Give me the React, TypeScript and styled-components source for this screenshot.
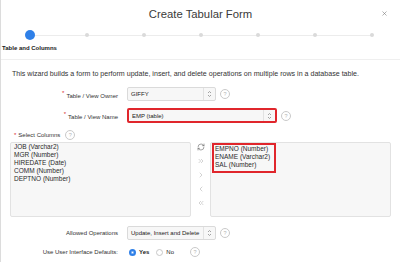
import React from 'react';
import styled, {createGlobalStyle} from 'styled-components';
import {RefreshCw, ChevronsRight, ChevronRight, ChevronLeft, ChevronsLeft, X} from 'lucide-react';

const GlobalStyle = createGlobalStyle`
  html, body {
    margin: 0;
    padding: 0;
    background: #fff;
  }

  body {
    font-family: "Liberation Sans", Arial, sans-serif;
    color: #333;
  }
`

const Dialog = styled.div`
  width: 400px;
  height: 262px;
  box-sizing: border-box;
  border-left: 1px solid #dcdcdc;
  background: #fff;
  overflow: hidden;
  display: flex;
  flex-direction: column;
`

const TitleBar = styled.div`
  position: relative;
  height: 28px;
  display: flex;
  align-items: center;
  justify-content: center;
  font-size: 11.3px;
  color: #3a3a3a;
`

const CloseButton = styled.span`
  position: absolute;
  right: 12px;
  top: 10px;
  display: flex;
  color: #7a7a7a;
`

const Progress = styled.div`
  height: 31px;
  display: flex;
  border-bottom: 1px solid #efefef;
`

type StepProps = {
    $first?: boolean
    $last?: boolean
}

const Step = styled.div<StepProps>`
  position: relative;
  width: 57px;
  display: flex;
  flex-direction: column;
  align-items: center;

  &::before {
    content: '';
    position: absolute;
    top: 7px;
    height: 1px;
    left: ${({$first}) => $first ? '50%' : '0'};
    right: ${({$last}) => $last ? '50%' : '0'};
    background: #ececec;
  }
`

const Dot = styled.span<{ $active?: boolean }>`
  position: relative;
  z-index: 1;
  width: ${({$active}) => $active ? '10px' : '4px'};
  height: ${({$active}) => $active ? '10px' : '4px'};
  margin-top: ${({$active}) => $active ? '2px' : '5px'};
  border-radius: 50%;
  background: ${({$active}) => $active ? '#2f80e8' : '#dadada'};
`

const StepLabel = styled.span`
  margin-top: 4px;
  font-size: 6px;
  line-height: 8px;
  font-weight: bold;
  white-space: nowrap;
  color: #222;
`

const Body = styled.div`
  display: flex;
  flex-direction: column;
  padding: 9px 9px 0 9px;
`

const Description = styled.p`
  margin: 0 0 0 2px;
  font-size: 7.1px;
  line-height: 10px;
  color: #333;
  white-space: nowrap;
`

const FormRow = styled.div<{ $top: number }>`
  display: grid;
  grid-template-columns: 108px auto;
  column-gap: 9px;
  align-items: center;
  margin-top: ${({$top}) => $top}px;
`

const Label = styled.span`
  text-align: right;
  font-size: 6px;
  color: #333;
  white-space: nowrap;
`

const Required = styled.span`
  color: #d9262c;
  font-size: 6px;
  vertical-align: super;
  margin-right: 2px;
`

const Field = styled.div`
  display: flex;
  align-items: center;
`

const Select = styled.div<{ $width: number, $error?: boolean }>`
  display: flex;
  align-items: stretch;
  width: ${({$width}) => $width}px;
  height: ${({$error}) => $error ? 15 : 14}px;
  box-sizing: border-box;
  border: ${({$error}) => $error ? '2px solid #e0262c' : '1px solid #dadada'};
  border-radius: 2px;
  background: #f7f7f7;
  font-size: 6px;
  color: #222;
`

const SelectValue = styled.span`
  flex: 1;
  display: flex;
  align-items: center;
  padding-left: 3px;
  white-space: nowrap;
`

const SelectArrows = styled.span`
  width: 11px;
  display: flex;
  align-items: center;
  justify-content: center;
  border-left: 1px solid #e2e2e2;
`

const Help = styled.span<{ $left: number }>`
  width: 8px;
  height: 8px;
  margin-left: ${({$left}) => $left}px;
  border: 1px solid #c9c9c9;
  border-radius: 50%;
  display: flex;
  align-items: center;
  justify-content: center;
  font-size: 5.5px;
  color: #b5b5b5;
`

const ColumnsHeader = styled.div`
  display: flex;
  align-items: center;
  margin-top: 7px;
  padding-left: 4px;
  height: 10px;
  font-size: 6px;
  color: #333;
`

const Lists = styled.div`
  display: flex;
  margin-top: 2px;
  height: 75px;
`

const ListBox = styled.div`
  width: 181px;
  height: 100%;
  box-sizing: border-box;
  border: 1px solid #e2e2e2;
  border-radius: 2px;
  background: #f7f7f7;
  padding: 0 3px;
`

const Selected = styled.div`
  display: inline-block;
  margin-left: -2px;
  border: 2px solid #e0262c;
  padding: 0 4px 2px 1px;
`

const Item = styled.div`
  font-size: 6.5px;
  line-height: 8px;
  color: #2a2a2a;
  white-space: nowrap;
`

const Shuttle = styled.div`
  width: 19px;
  display: flex;
  flex-direction: column;
  align-items: center;
  gap: 6px;
  padding-top: 1px;
  color: #999;
`

const RadioGroup = styled.div`
  display: flex;
  align-items: center;
  font-size: 6px;
  color: #222;
`

const Radio = styled.span<{ $checked?: boolean, $left: number }>`
  width: 7px;
  height: 7px;
  box-sizing: border-box;
  margin-left: ${({$left}) => $left}px;
  margin-right: 3px;
  border-radius: 50%;
  border: ${({$checked}) => $checked ? '2px solid #2f80e8' : '1px solid #c8c8c8'};
  background: #fff;
  box-shadow: ${({$checked}) => $checked ? 'inset 0 0 0 0.5px #2f80e8' : 'none'};
`

const RadioText = styled.span<{ $bold?: boolean }>`
  font-weight: ${({$bold}) => $bold ? 'bold' : 'normal'};
`

const Arrows = () => (
    <svg width="5" height="8" viewBox="0 0 5 8" fill="none" stroke="#8d8d8d" strokeWidth="0.8">
        <path d="M1 3 L2.5 1.5 L4 3"/>
        <path d="M1 5 L2.5 6.5 L4 5"/>
    </svg>
)

const steps = [0, 1, 2, 3, 4, 5, 6]
const available = ['JOB (Varchar2)', 'MGR (Number)', 'HIREDATE (Date)', 'COMM (Number)', 'DEPTNO (Number)']
const chosen = ['EMPNO (Number)', 'ENAME (Varchar2)', 'SAL (Number)']

const App = () => {
    return (
        <>
            <GlobalStyle/>
            <Dialog>
                <TitleBar>
                    Create Tabular Form
                    <CloseButton><X size={7} strokeWidth={2}/></CloseButton>
                </TitleBar>
                <Progress>
                    {steps.map((s) => (
                        <Step key={s} $first={s === 0} $last={s === steps.length - 1}>
                            <Dot $active={s === 0}/>
                            {s === 0 ? <StepLabel>Table and Columns</StepLabel> : null}
                        </Step>
                    ))}
                </Progress>
                <Body>
                    <Description>
                        This wizard builds a form to perform update, insert, and delete operations on multiple rows in a database table.
                    </Description>
                    <FormRow $top={8}>
                        <Label><Required>*</Required>Table / View Owner</Label>
                        <Field>
                            <Select $width={89}>
                                <SelectValue>GIFFY</SelectValue>
                                <SelectArrows><Arrows/></SelectArrows>
                            </Select>
                            <Help $left={4}>?</Help>
                        </Field>
                    </FormRow>
                    <FormRow $top={7}>
                        <Label><Required>*</Required>Table / View Name</Label>
                        <Field>
                            <Select $width={150} $error>
                                <SelectValue>EMP (table)</SelectValue>
                                <SelectArrows><Arrows/></SelectArrows>
                            </Select>
                            <Help $left={4}>?</Help>
                        </Field>
                    </FormRow>
                    <ColumnsHeader>
                        <Required>*</Required>Select Columns
                        <Help $left={5}>?</Help>
                    </ColumnsHeader>
                    <Lists>
                        <ListBox>
                            {available.map((c) => <Item key={c}>{c}</Item>)}
                        </ListBox>
                        <Shuttle>
                            <RefreshCw size={8} strokeWidth={1.6} color="#555"/>
                            <ChevronsRight size={8} strokeWidth={1.3}/>
                            <ChevronRight size={8} strokeWidth={1.3}/>
                            <ChevronLeft size={8} strokeWidth={1.3}/>
                            <ChevronsLeft size={8} strokeWidth={1.3}/>
                        </Shuttle>
                        <ListBox>
                            <Selected>
                                {chosen.map((c) => <Item key={c}>{c}</Item>)}
                            </Selected>
                        </ListBox>
                    </Lists>
                    <FormRow $top={9}>
                        <Label>Allowed Operations</Label>
                        <Field>
                            <Select $width={89}>
                                <SelectValue>Update, Insert and Delete</SelectValue>
                                <SelectArrows><Arrows/></SelectArrows>
                            </Select>
                            <Help $left={4}>?</Help>
                        </Field>
                    </FormRow>
                    <FormRow $top={7}>
                        <Label>Use User Interface Defaults:</Label>
                        <RadioGroup>
                            <Radio $checked $left={2}/>
                            <RadioText $bold>Yes</RadioText>
                            <Radio $left={7}/>
                            <RadioText>No</RadioText>
                            <Help $left={16}>?</Help>
                        </RadioGroup>
                    </FormRow>
                </Body>
            </Dialog>
        </>
    );
};

export default App;
